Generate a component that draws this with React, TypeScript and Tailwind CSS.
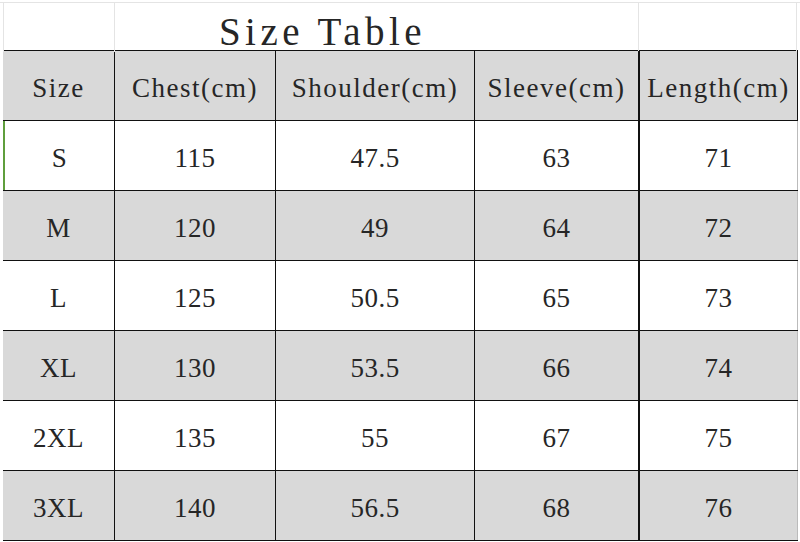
import React from "react";

const headers = ["Size", "Chest(cm)", "Shoulder(cm)", "Sleeve(cm)", "Length(cm)"];
const rows = [
  ["S", "115", "47.5", "63", "71"],
  ["M", "120", "49", "64", "72"],
  ["L", "125", "50.5", "65", "73"],
  ["XL", "130", "53.5", "66", "74"],
  ["2XL", "135", "55", "67", "75"],
  ["3XL", "140", "56.5", "68", "76"],
];

const font = { fontFamily: '"Liberation Serif", "Times New Roman", serif' };

export default function App() {
  return (
    <div className="w-[800px] h-[542px] bg-white text-[#262626] overflow-hidden" style={font}>
      {/* title row */}
      <div className="h-[50px] flex border-t border-[#e4e4e4] mt-[2px]">
        <div className="w-[3px]" />
        <div className="w-[111px] border-l border-[#e4e4e4]" />
        <div className="w-[524px] border-l border-[#e4e4e4] relative">
          <div className="absolute left-[-114px] right-0 top-0 bottom-0 flex items-center justify-center pl-[6px] pt-[8px] text-[39px] tracking-[4.5px] leading-none">
            Size Table
          </div>
        </div>
        <div className="w-[159px] border-l border-r border-[#e4e4e4]" />
      </div>
      {/* table */}
      <div className="ml-[3px] w-[795px] border-t border-[#111] -mt-[2px]">
        <div className="grid grid-cols-[111px_161px_199px_164px_160px] h-[70px] bg-[#d9d9d9] border-b border-[#111]">
          {headers.map((h, i) => (
            <div
              key={h}
              className={`flex items-center justify-center pt-[6px] text-[27px] tracking-[1.5px] leading-none ${i > 0 ? "border-l border-[#111]" : ""} ${i === 4 ? "border-r border-[#111]" : ""} ${i === 4 ? "border-l-2" : ""}`}
            >
              {h}
            </div>
          ))}
        </div>
        {rows.map((r, ri) => (
          <div
            key={r[0]}
            className={`grid grid-cols-[111px_161px_199px_164px_160px] h-[70px] border-b border-[#111] ${ri % 2 === 1 ? "bg-[#d9d9d9]" : "bg-white"}`}
          >
            {r.map((c, ci) => (
              <div
                key={ci}
                className={`flex items-center justify-center pt-[6px] text-[27px] tracking-[0.5px] leading-none ${ci > 0 ? "border-l border-[#111]" : ""} ${ci === 4 ? "border-l-2 border-r border-r-[#bbb]" : ""} ${ri === 0 && ci === 0 ? "border-l-2 border-l-[#5f9e3c]" : ""}`}
              >
                {c}
              </div>
            ))}
          </div>
        ))}
      </div>
    </div>
  );
}
